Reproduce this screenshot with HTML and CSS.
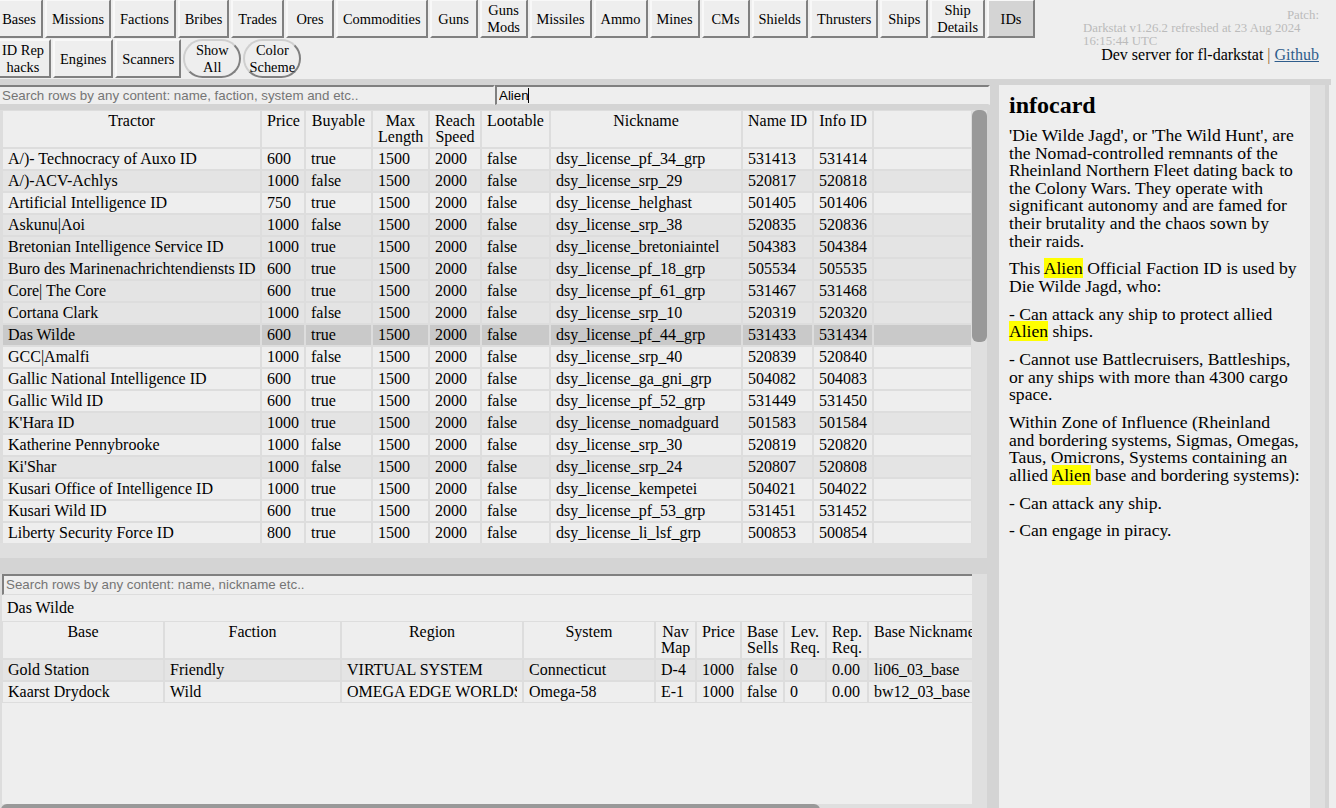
FILE: index.html
```html
<!DOCTYPE html>
<html lang="en">
<head>
    <meta charset="UTF-8">
    <meta name="viewport" content="width=device-width, initial-scale=1.0">
    <title>IDs</title>
    <link rel="stylesheet" href="styles.css">
</head>
<body>
    <header class="top-bar">
        <nav class="tabs">
            <button class="tab">Bases</button>
            <button class="tab">Missions</button>
            <button class="tab">Factions</button>
            <button class="tab">Bribes</button>
            <button class="tab">Trades</button>
            <button class="tab">Ores</button>
            <button class="tab">Commodities</button>
            <button class="tab">Guns</button>
            <button class="tab">Guns<br>Mods</button>
            <button class="tab">Missiles</button>
            <button class="tab">Ammo</button>
            <button class="tab">Mines</button>
            <button class="tab">CMs</button>
            <button class="tab">Shields</button>
            <button class="tab">Thrusters</button>
            <button class="tab">Ships</button>
            <button class="tab">Ship<br>Details</button>
            <button class="tab active">IDs</button>
            <button class="tab">ID Rep<br>hacks</button>
            <button class="tab">Engines</button>
            <button class="tab">Scanners</button>
            <button class="tab round">Show<br>All</button>
            <button class="tab round">Color<br>Scheme</button>
        </nav>
        <div class="build-info">
            <div class="patch">
                <div class="patch-label">Patch:</div>
                Darkstat v1.26.2 refreshed at 23 Aug 2024 16:15:44 UTC
            </div>
            <div class="dev-line">Dev server for fl-darkstat <span class="sep">|</span> <a href="#">Github</a></div>
        </div>
    </header>

    <div class="band"></div>

    <main class="content">
        <div class="left-col">
            <div class="search-row">
                <input class="search first" type="text" placeholder="Search rows by any content: name, faction, system and etc..">
                <div class="search-wrap">
                    <input class="search second" type="text" value="Alien">
                    <span class="caret"></span>
                </div>
            </div>

            <div class="panel top-panel">
                <div class="view">
                    <table class="grid">
                        <thead>
                            <tr>
                                <th class="t-name">Tractor</th>
                                <th class="t-price">Price</th>
                                <th class="t-buy">Buyable</th>
                                <th class="t-len">Max Length</th>
                                <th class="t-speed">Reach Speed</th>
                                <th class="t-loot">Lootable</th>
                                <th class="t-nick">Nickname</th>
                                <th class="t-nameid">Name ID</th>
                                <th class="t-infoid">Info ID</th>
                                <th></th>
                            </tr>
                        </thead>
                        <tbody>
                            <tr><td>A/)- Technocracy of Auxo ID</td><td>600</td><td>true</td><td>1500</td><td>2000</td><td>false</td><td>dsy_license_pf_34_grp</td><td>531413</td><td>531414</td><td></td></tr>
                            <tr class="shaded"><td>A/)-ACV-Achlys</td><td>1000</td><td>false</td><td>1500</td><td>2000</td><td>false</td><td>dsy_license_srp_29</td><td>520817</td><td>520818</td><td></td></tr>
                            <tr><td>Artificial Intelligence ID</td><td>750</td><td>true</td><td>1500</td><td>2000</td><td>false</td><td>dsy_license_helghast</td><td>501405</td><td>501406</td><td></td></tr>
                            <tr class="shaded"><td>Askunu|Aoi</td><td>1000</td><td>false</td><td>1500</td><td>2000</td><td>false</td><td>dsy_license_srp_38</td><td>520835</td><td>520836</td><td></td></tr>
                            <tr class="shaded"><td>Bretonian Intelligence Service ID</td><td>1000</td><td>true</td><td>1500</td><td>2000</td><td>false</td><td>dsy_license_bretoniaintel</td><td>504383</td><td>504384</td><td></td></tr>
                            <tr class="shaded"><td>Buro des Marinenachrichtendiensts ID</td><td>600</td><td>true</td><td>1500</td><td>2000</td><td>false</td><td>dsy_license_pf_18_grp</td><td>505534</td><td>505535</td><td></td></tr>
                            <tr class="shaded"><td>Core| The Core</td><td>600</td><td>true</td><td>1500</td><td>2000</td><td>false</td><td>dsy_license_pf_61_grp</td><td>531467</td><td>531468</td><td></td></tr>
                            <tr class="shaded"><td>Cortana Clark</td><td>1000</td><td>false</td><td>1500</td><td>2000</td><td>false</td><td>dsy_license_srp_10</td><td>520319</td><td>520320</td><td></td></tr>
                            <tr class="selected"><td>Das Wilde</td><td>600</td><td>true</td><td>1500</td><td>2000</td><td>false</td><td>dsy_license_pf_44_grp</td><td>531433</td><td>531434</td><td></td></tr>
                            <tr><td>GCC|Amalfi</td><td>1000</td><td>false</td><td>1500</td><td>2000</td><td>false</td><td>dsy_license_srp_40</td><td>520839</td><td>520840</td><td></td></tr>
                            <tr><td>Gallic National Intelligence ID</td><td>600</td><td>true</td><td>1500</td><td>2000</td><td>false</td><td>dsy_license_ga_gni_grp</td><td>504082</td><td>504083</td><td></td></tr>
                            <tr><td>Gallic Wild ID</td><td>600</td><td>true</td><td>1500</td><td>2000</td><td>false</td><td>dsy_license_pf_52_grp</td><td>531449</td><td>531450</td><td></td></tr>
                            <tr class="shaded"><td>K'Hara ID</td><td>1000</td><td>true</td><td>1500</td><td>2000</td><td>false</td><td>dsy_license_nomadguard</td><td>501583</td><td>501584</td><td></td></tr>
                            <tr><td>Katherine Pennybrooke</td><td>1000</td><td>false</td><td>1500</td><td>2000</td><td>false</td><td>dsy_license_srp_30</td><td>520819</td><td>520820</td><td></td></tr>
                            <tr class="shaded"><td>Ki'Shar</td><td>1000</td><td>false</td><td>1500</td><td>2000</td><td>false</td><td>dsy_license_srp_24</td><td>520807</td><td>520808</td><td></td></tr>
                            <tr><td>Kusari Office of Intelligence ID</td><td>1000</td><td>true</td><td>1500</td><td>2000</td><td>false</td><td>dsy_license_kempetei</td><td>504021</td><td>504022</td><td></td></tr>
                            <tr><td>Kusari Wild ID</td><td>600</td><td>true</td><td>1500</td><td>2000</td><td>false</td><td>dsy_license_pf_53_grp</td><td>531451</td><td>531452</td><td></td></tr>
                            <tr><td>Liberty Security Force ID</td><td>800</td><td>true</td><td>1500</td><td>2000</td><td>false</td><td>dsy_license_li_lsf_grp</td><td>500853</td><td>500854</td><td></td></tr>
                        </tbody>
                    </table>
                </div>
                <div class="vbar"><div class="thumb vthumb"></div></div>
                <div class="hbar"></div>
                <div class="corner"></div>
            </div>

            <div class="panel bottom-panel">
                <div class="view">
                    <div class="bottom-inner">
                        <input class="search sub" type="text" placeholder="Search rows by any content: name, nickname etc..">
                        <div class="picked">Das Wilde</div>
                        <table class="grid wide">
                            <thead>
                                <tr>
                                    <th class="b-base">Base</th>
                                    <th class="b-faction">Faction</th>
                                    <th class="b-region">Region</th>
                                    <th class="b-system">System</th>
                                    <th class="b-nav">Nav Map</th>
                                    <th class="b-price">Price</th>
                                    <th class="b-sells">Base Sells</th>
                                    <th class="b-lev">Lev. Req.</th>
                                    <th class="b-rep">Rep. Req.</th>
                                    <th class="b-nick">Base Nickname</th>
                                    <th></th>
                                </tr>
                            </thead>
                            <tbody>
                                <tr class="shaded"><td>Gold Station</td><td>Friendly</td><td>VIRTUAL SYSTEM</td><td>Connecticut</td><td>D-4</td><td>1000</td><td>false</td><td>0</td><td>0.00</td><td>li06_03_base</td><td></td></tr>
                                <tr><td>Kaarst Drydock</td><td>Wild</td><td><div class="clip">OMEGA EDGE WORLDS</div></td><td>Omega-58</td><td>E-1</td><td>1000</td><td>false</td><td>0</td><td>0.00</td><td>bw12_03_base</td><td></td></tr>
                            </tbody>
                        </table>
                    </div>
                </div>
                <div class="vbar"></div>
                <div class="hbar"><div class="thumb hthumb"></div></div>
                <div class="corner"></div>
            </div>
        </div>

        <div class="right-col">
            <aside class="infocard">
                <h2>infocard</h2>
                <p>'Die Wilde Jagd', or 'The Wild Hunt', are the Nomad-controlled remnants of the Rheinland Northern Fleet dating back to the Colony Wars. They operate with significant autonomy and are famed for their brutality and the chaos sown by their raids.</p>
                <p>This <mark>Alien</mark> Official Faction ID is used by Die Wilde Jagd, who:</p>
                <p>- Can attack any ship to protect allied <mark>Alien</mark> ships.</p>
                <p>- Cannot use Battlecruisers, Battleships, or any ships with more than 4300 cargo space.</p>
                <p>Within Zone of Influence (Rheinland<br>and bordering systems, Sigmas, Omegas, Taus, Omicrons, Systems containing an allied <mark>Alien</mark> base and bordering systems):</p>
                <p>- Can attack any ship.</p>
                <p>- Can engage in piracy.</p>
            </aside>
            <div class="vbar"></div>
        </div>
    </main>
</body>
</html>
```
FILE: styles.css
```css
html, body {
    height: 100%;
    overflow: hidden;
}

body {
    margin: 0;
    background-color: #eeeeee;
    color: #000;
    font-family: "Liberation Serif", serif;
    font-size: 16px;
}

/* top bar */
.top-bar {
    display: flex;
    justify-content: space-between;
    height: 79px;
    overflow: hidden;
}

.tabs {
    display: flex;
    flex-wrap: wrap;
    align-content: flex-start;
    width: 1043px;
    margin-left: -5px;
    margin-top: -1px;
    gap: 1px 0;
}

.tab {
    box-sizing: border-box;
    height: 39px;
    min-width: 48px;
    margin-right: 2px;
    padding: 1px 5px 0;
    border: 2px solid;
    border-color: #f8f8f8 #808080 #808080 #f8f8f8;
    background-color: #eeeeee;
    color: #000;
    font-family: "Liberation Serif", serif;
    font-size: 14.4px;
    line-height: 17px;
}

.tab.active {
    background-color: #d4d4d4;
}

.tab.round {
    min-width: 58px;
    border-radius: 20px;
    border-color: #cfcfcf #808080 #808080 #cfcfcf;
    padding: 1px 0 0;
}

.build-info {
    width: 236px;
    margin-right: 17px;
    padding-top: 9px;
}

.patch {
    color: #bbbbbb;
    font-size: 12.8px;
    line-height: 13px;
}

.patch-label {
    text-align: right;
}

.dev-line {
    margin-top: -2px;
    text-align: right;
    line-height: 18px;
}

.dev-line .sep {
    color: #96602c;
}

.dev-line a {
    color: #2f5d8c;
}

/* main layout */
.band {
    width: 1331px;
    height: 6px;
    background-color: #d4d4d4;
}

.content {
    display: flex;
    gap: 12px;
    width: 1329px;
    height: 723px;
    background-color: #d4d4d4;
}

.left-col {
    width: 987px;
}

.search-row {
    display: flex;
    width: 990px;
    height: 20px;
}

.search-wrap {
    position: relative;
    width: 495px;
}

.search {
    box-sizing: border-box;
    height: 20px;
    padding: 0 2px;
    border: 2px solid #eeeeee;
    border-top-color: #808080;
    border-left-color: #808080;
    border-bottom: 1px solid #d4d4d4;
    outline: none;
    background-color: #eeeeee;
    color: #000;
    font-family: "Liberation Sans", sans-serif;
    font-size: 13.33px;
}

.search.first {
    width: 495px;
    border-left: none;
}

.search.second {
    display: block;
    width: 100%;
}

.caret {
    position: absolute;
    left: 33px;
    top: 3px;
    width: 1px;
    height: 15px;
    background-color: #000;
}

.search::placeholder {
    color: #757575;
}

/* table panels, scrollbars drawn by hand */
.panel {
    display: grid;
    grid-template-columns: 972px 15px;
    grid-template-rows: 1fr 15px;
}

.top-panel {
    height: 448px;
    margin-top: 5px;
}

.bottom-panel {
    height: 245px;
    margin-top: 16px;
}

.view {
    box-sizing: border-box;
    padding-left: 2px;
    background-color: #dddddd;
    overflow: hidden;
}

.vbar,
.hbar,
.corner {
    background-color: #dfdfdf;
}

.thumb {
    background-color: #999999;
    border-radius: 6px;
}

.vthumb {
    height: 232px;
}

.hthumb {
    width: 819px;
    height: 15px;
    margin-left: 1px;
}

.bottom-inner {
    width: 1150px;
    min-height: 100%;
    background-color: #eeeeee;
}

.search.sub {
    display: block;
    width: 970px;
    height: 21px;
    padding-bottom: 2px;
    border-bottom-color: #dddddd;
    border-right: none;
}

.picked {
    height: 26px;
    padding-left: 5px;
    line-height: 26px;
}

/* tables */
.grid {
    width: 970px;
    table-layout: fixed;
    border-collapse: separate;
    border-spacing: 0;
    line-height: 16px;
}

.grid.wide {
    width: 1150px;
}

.grid th,
.grid td {
    box-sizing: border-box;
    padding: 2px 5px;
    border: 1px solid #dddddd;
    background-color: #eeeeee;
    font-weight: normal;
    overflow: hidden;
    vertical-align: top;
}

.grid td,
.grid .t-nameid,
.grid .t-infoid,
.grid .b-nick {
    white-space: nowrap;
}

.grid .b-nick {
    text-align: left;
}

.grid tr.shaded td {
    background-color: #e4e4e4;
}

.grid tr.selected td {
    background-color: #c9c9c9;
}

.clip {
    overflow: hidden;
}

.t-name { width: 259px; }
.t-price { width: 44px; }
.t-buy { width: 67px; }
.t-len { width: 57px; }
.t-speed { width: 52px; }
.t-loot { width: 69px; }
.t-nick { width: 192px; }
.t-nameid { width: 71px; }
.t-infoid { width: 60px; }

.b-base { width: 162px; }
.b-faction { width: 177px; }
.b-region { width: 182px; }
.b-system { width: 132px; }
.b-nav { width: 41px; }
.b-price { width: 45px; }
.b-sells { width: 43px; }
.b-lev { width: 42px; }
.b-rep { width: 42px; }
.b-nick { width: 114px; }

/* infocard */
.right-col {
    display: grid;
    grid-template-columns: 311px 15px;
}

.infocard {
    box-sizing: border-box;
    padding: 4px 10px 0;
    background-color: #eeeeee;
    overflow: hidden;
    font-size: 17.6px;
    line-height: 17.6px;
}

.infocard h2 {
    margin: 3px 0 8px;
    font-size: 24px;
    line-height: 27px;
}

.infocard p {
    margin: 0 0 10.2px;
}

.infocard mark {
    background-color: #ffff00;
    color: #000;
}
```
